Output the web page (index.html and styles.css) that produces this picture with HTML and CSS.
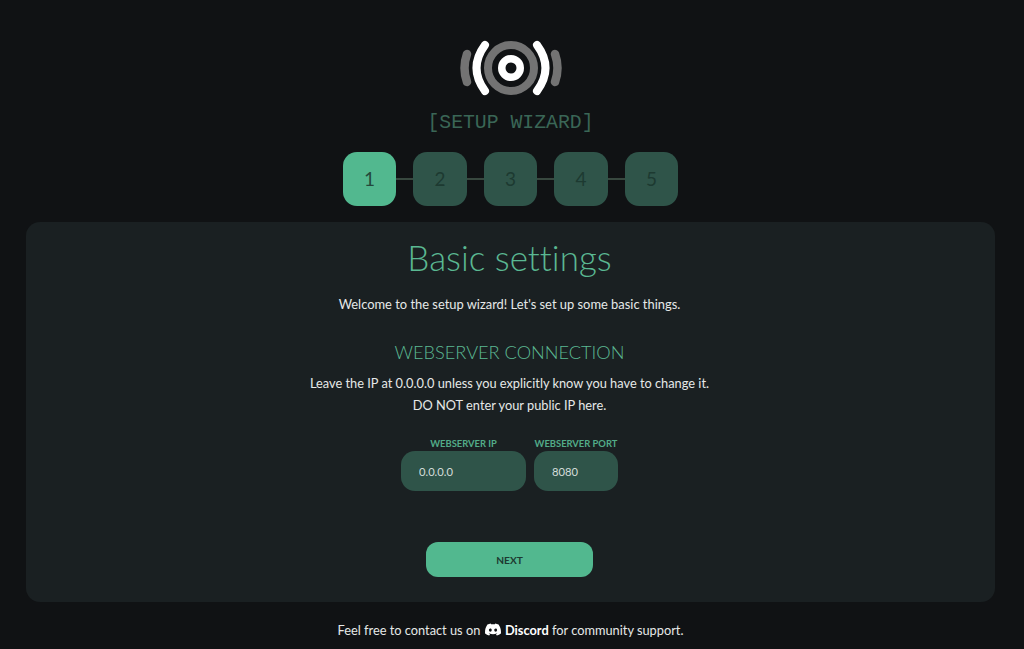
FILE: index.html
```html
<!DOCTYPE html>
<html lang="en">
<head>
<meta charset="utf-8">
<title>Setup Wizard</title>
<link rel="stylesheet" href="styles.css">
</head>
<body>
<header class="top">
  <svg class="logo" width="104" height="58" viewBox="0 0 104 58" aria-hidden="true">
    <circle cx="52" cy="28" r="23" fill="none" stroke="#737373" stroke-width="8"/>
    <circle cx="52" cy="28" r="9.25" fill="none" stroke="#fff" stroke-width="7.5"/>
    <path d="M26 5 Q9 28 26 51" fill="none" stroke="#fff" stroke-width="8" stroke-linecap="round"/>
    <path d="M78 5 Q95 28 78 51" fill="none" stroke="#fff" stroke-width="8" stroke-linecap="round"/>
    <path d="M8 14 Q3 28 8 42" fill="none" stroke="#737373" stroke-width="8.5" stroke-linecap="round"/>
    <path d="M96 14 Q101 28 96 42" fill="none" stroke="#737373" stroke-width="8.5" stroke-linecap="round"/>
  </svg>
  <div class="wizard-tag">[SETUP WIZARD]</div>
  <ol class="steps">
    <li class="step step-active">1</li>
    <li class="link"></li>
    <li class="step">2</li>
    <li class="link"></li>
    <li class="step">3</li>
    <li class="link"></li>
    <li class="step">4</li>
    <li class="link"></li>
    <li class="step">5</li>
  </ol>
</header>
<main class="card">
  <h1 class="title">Basic settings</h1>
  <p class="intro">Welcome to the setup wizard! Let's set up some basic things.</p>
  <h2 class="section">WEBSERVER CONNECTION</h2>
  <p class="note">Leave the IP at 0.0.0.0 unless you explicitly know you have to change it.<br>DO NOT enter your public IP here.</p>
  <div class="fields">
    <label class="field field-ip">
      <span class="field-label">WEBSERVER IP</span>
      <input class="input" type="text" value="0.0.0.0">
    </label>
    <label class="field field-port">
      <span class="field-label">WEBSERVER PORT</span>
      <input class="input" type="text" value="8080">
    </label>
  </div>
  <button class="next" type="button">NEXT</button>
</main>
<footer class="foot">Feel free to contact us on
  <svg class="discord" width="16" height="13" viewBox="0 0 127.14 96.36" aria-hidden="true"><path fill="#fff" d="M107.7 8.07A105.15 105.15 0 0 0 81.47 0a72.06 72.06 0 0 0-3.36 6.83 97.68 97.68 0 0 0-29.11 0A72.37 72.37 0 0 0 45.64 0a105.89 105.89 0 0 0-26.25 8.09C2.79 32.65-1.71 56.6.54 80.21a105.73 105.73 0 0 0 32.17 16.15 77.7 77.7 0 0 0 6.89-11.11 68.42 68.42 0 0 1-10.85-5.18c.91-.66 1.8-1.34 2.66-2a75.57 75.57 0 0 0 64.32 0c.87.71 1.76 1.39 2.66 2a68.68 68.68 0 0 1-10.87 5.19 77 77 0 0 0 6.89 11.1 105.25 105.25 0 0 0 32.19-16.14c2.64-27.38-4.51-51.11-18.9-72.15ZM42.45 65.69C36.18 65.69 31 60 31 53s5-12.74 11.43-12.74S54 46 53.89 53s-5.05 12.69-11.44 12.69Zm42.24 0C78.41 65.69 73.25 60 73.25 53s5-12.74 11.44-12.74S96.23 46 96.12 53s-5.04 12.69-11.43 12.69Z"/></svg>
  <strong class="brand">Discord</strong> for community support.
</footer>
</body>
</html>
```
FILE: styles.css
```css
* { box-sizing: border-box; }
html, body { margin: 0; height: 100%; }
body {
  background: #101214;
  color: #e6e9e8;
  font-family: "Lato", "Noto Sans", sans-serif;
  font-variant-ligatures: none;
  font-size: 12.9px;
  overflow: hidden;
  display: flex;
  flex-direction: column;
  align-items: center;
  padding-right: 3px;
}
.top {
  display: flex;
  flex-direction: column;
  align-items: center;
  padding-top: 40px;
}
.logo { display: block; }
.wizard-tag {
  margin-top: 13px;
  font-family: "Liberation Mono", "DejaVu Sans Mono", monospace;
  font-weight: 400;
  font-size: 19.8px;
  line-height: 24px;
  color: #3a6656;
}
.steps {
  list-style: none;
  display: flex;
  align-items: center;
  margin: 17px 0 0;
  padding: 0;
}
.step {
  width: 53.5px;
  height: 53.5px;
  border-radius: 14px;
  background: #2f5449;
  color: #1d3a31;
  display: flex;
  align-items: center;
  justify-content: center;
  font-size: 19px;
}
.step-active { background: #52b88f; color: #24493c; }
.link { width: 17px; height: 2px; background: #38483f; }
.card {
  width: 969px;
  height: 380px;
  margin-top: 16.5px;
  padding-right: 2px;
  background: #1a2022;
  border-radius: 14px;
  display: flex;
  flex-direction: column;
  align-items: center;
  text-align: center;
}
.title {
  margin: 13px 0 0;
  font-weight: 300;
  font-size: 35px;
  line-height: 44px;
  color: #5ab892;
}
.intro { margin: 15px 0 0; line-height: 20px; }
.section {
  margin: 26px 0 0;
  font-weight: 300;
  font-size: 18.2px;
  line-height: 24px;
  color: #5ab892;
}
.note { margin: 9px 0 0; line-height: 21.5px; font-size: 12.8px; }
.fields { display: flex; gap: 8px; margin-top: 21px; }
.field { display: flex; flex-direction: column; align-items: center; }
.field-ip { width: 125px; }
.field-port { width: 84px; }
.field-label {
  font-size: 9.4px;
  font-weight: 700;
  line-height: 14px;
  color: #52ab88;
  white-space: nowrap;
}
.input {
  width: 100%;
  height: 40px;
  border: 0;
  border-radius: 14px;
  background: #2f5449;
  color: #d5dedb;
  font-family: inherit;
  font-size: 11.2px;
  padding: 0 18px;
  outline: none;
}
.next {
  width: 167px;
  height: 35px;
  margin-top: 51px;
  border: 0;
  border-radius: 12px;
  background: #52b88f;
  color: #1d3a31;
  font-family: inherit;
  font-weight: 700;
  font-size: 10.2px;
}
.foot { margin-top: 19px; line-height: 18px; font-size: 12.8px; }
.discord { vertical-align: -1px; margin: 0 1px; }
.brand { color: #fff; font-weight: 700; }
```
